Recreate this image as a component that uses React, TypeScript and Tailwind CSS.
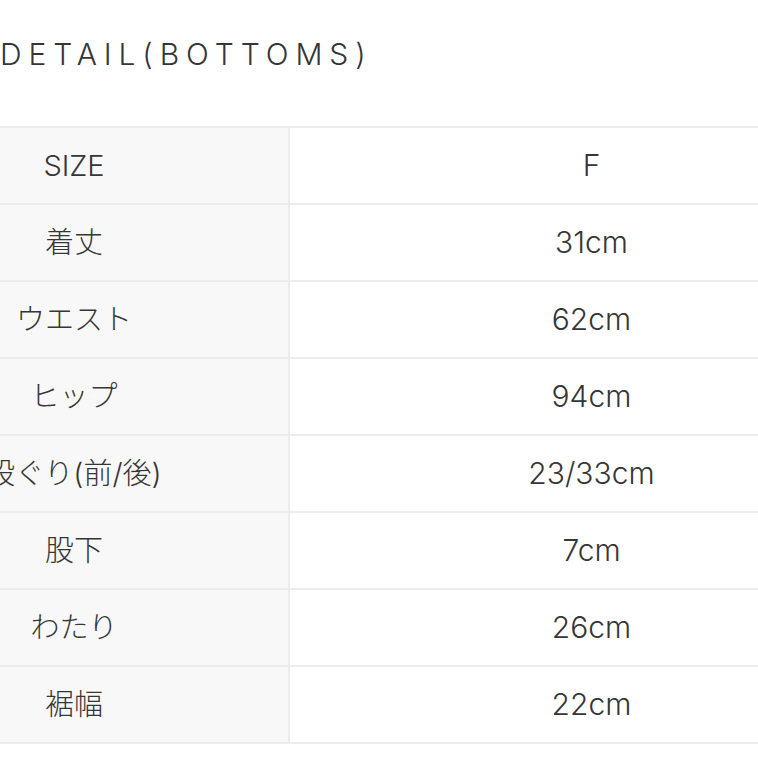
const rows: [string, string][] = [
  ["SIZE", "F"],
  ["着丈", "31cm"],
  ["ウエスト", "62cm"],
  ["ヒップ", "94cm"],
  ["股ぐり(前/後)", "23/33cm"],
  ["股下", "7cm"],
  ["わたり", "26cm"],
  ["裾幅", "22cm"],
];

const font = { fontFamily: "Inter, 'Noto Sans CJK JP', sans-serif" };

export default function App() {
  return (
    <div className="w-[758px] h-[758px] overflow-hidden bg-white text-[#363636]" style={font}>
      <h2 className="pt-[39px] text-[30px] leading-[30px] font-light tracking-[0.23em] whitespace-nowrap">
        DETAIL(BOTTOMS)
      </h2>
      <div className="mt-[57px] ml-[-140px] w-[1033px] border-t-2 border-[#ececec]">
        {rows.map(([label, value]) => (
          <div key={label} className="flex h-[77px] border-b-2 border-[#ececec]">
            <div className="w-[430px] flex items-center justify-center bg-[#f8f8f8] border-r-2 border-[#ececec] text-[29px] font-light whitespace-nowrap">
              {label}
            </div>
            <div className="flex-1 flex items-center justify-center text-[30px] font-light">
              {value}
            </div>
          </div>
        ))}
      </div>
    </div>
  );
}
